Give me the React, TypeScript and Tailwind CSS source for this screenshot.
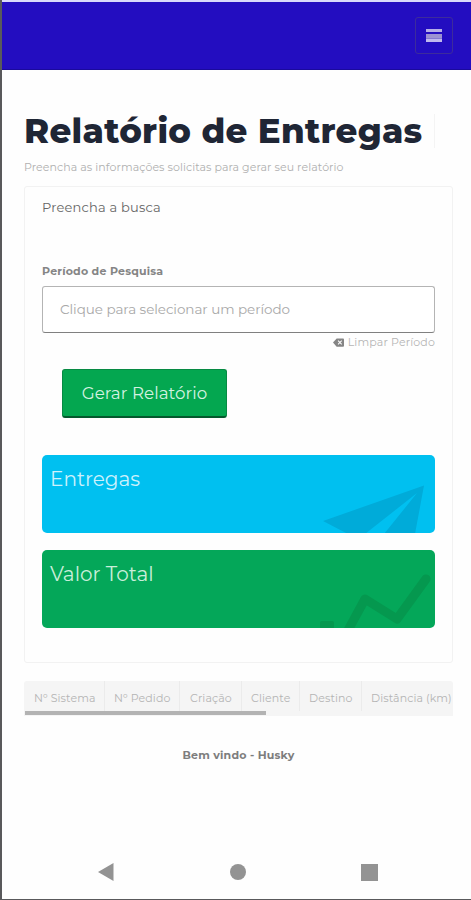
import React from 'react'

const columns = [
  { label: 'Nº Sistema', cell: 'w-[81px] pl-[10px] border-r' },
  { label: 'Nº Pedido', cell: 'w-[75px] pl-[9px] border-r' },
  { label: 'Criação', cell: 'w-[62px] pl-[10px] border-r' },
  { label: 'Cliente', cell: 'w-[58px] pl-[9px] border-r' },
  { label: 'Destino', cell: 'w-[62px] pl-[9px] border-r' },
  { label: 'Distância (km)', cell: 'w-[91px] pl-[9px]' },
]

function Header() {
  return (
    <header className="h-[70px] border-t-2 border-[#d9d9fb] border-b border-b-[#1a0a9c] bg-[#230dc0] flex items-center justify-end pr-[18px]">
      <button className="w-[38px] h-[37px] border border-[#3c2b9c] rounded-[3px] flex flex-col items-center justify-center">
        <span className="w-4 h-[3px] bg-[#b5ade8]"></span>
        <span className="w-4 h-[4px] mt-[2px] bg-[#9c92d2]"></span>
        <span className="w-4 h-[1px] bg-[#8579d0]"></span>
        <span className="w-4 h-[3px] bg-[#c0b9ee]"></span>
      </button>
    </header>
  )
}

function SearchForm() {
  return (
    <div>
      <label className="block h-4 leading-4 text-[11px] font-bold text-[#858585] tracking-[0.2px] whitespace-nowrap">Período de Pesquisa</label>
      <input
        className="block mt-[7px] w-full h-[47px] border border-[#b4b4b4] border-b-[#808080] rounded-[3px] pl-[17px] pb-[1px] text-[13.5px] tracking-[-0.05px] placeholder:text-[#a8a8a8] bg-white"
        placeholder="Clique para selecionar um período"
      />
      <div className="h-[18px] flex items-center justify-end gap-[4px] text-[11px] text-[#b5b5b5] tracking-[0.15px] whitespace-nowrap">
        <svg width="11" height="9" viewBox="0 0 12 9">
          <path d="M4 0h7q1 0 1 1v7q0 1-1 1H4L0 4.5z" fill="#858585" />
          <path d="M5.5 2.5l4 4m0-4l-4 4" stroke="#fff" strokeWidth="1.1" />
        </svg>
        <span>Limpar Período</span>
      </div>
      <button className="block ml-5 mt-[18px] w-[165px] h-[49px] pt-[2px] rounded-[3px] bg-[#04a750] border border-[#078a43] border-b-2 border-b-[#04592d] text-[#d5f2e1] text-[16.7px] tracking-[0.05px] whitespace-nowrap">
        Gerar Relatório
      </button>
    </div>
  )
}

export default function App() {
  return (
    <div className="w-full h-[900px] overflow-hidden bg-[#fefefe] border-l-2 border-[#59595b] border-b flex flex-col font-['Montserrat','Inter',sans-serif]">
      <Header />
      <main className="pl-[22px] pr-[18px] flex-1">
        {/* page title */}
        <div className="mt-[44px] h-[34px] w-[411px] border-r border-[#f4f4f4]">
          <h1 className="leading-[34px] text-[34px] font-extrabold text-[#1f2635] tracking-[0.3px] whitespace-nowrap">Relatório de Entregas</h1>
        </div>
        <p className="mt-[11px] h-4 leading-4 text-[11px] text-[#b0b0b0] tracking-[0.08px] whitespace-nowrap">Preencha as informações solicitas para gerar seu relatório</p>

        {/* search card */}
        <section className="mt-[11px] h-[477px] border border-[#f2f2f2] rounded-[3px] px-[17px] pt-[10px]">
          <h2 className="h-[20px] leading-[20px] mb-[46px] text-[13px] text-[#666] tracking-[0.2px] whitespace-nowrap">Preencha a busca</h2>
          <SearchForm />
          <div className="relative overflow-hidden mt-[37px] h-[78px] rounded-[5px] bg-[#00c0f0] px-[8px] pt-[9px]">
            <h3 className="leading-[30px] text-[20px] text-[#cdf1fc] whitespace-nowrap">Entregas</h3>
            <svg className="absolute right-0 bottom-0" width="120" height="60" viewBox="315 473 120 60">
              <path d="M323 521L424 485.500L415 534H384L417 493L365 534H348z" fill="#00abd9" />
            </svg>
          </div>
          <div className="relative overflow-hidden mt-[17px] h-[78px] rounded-[5px] bg-[#04a759] px-[8px] pt-[9px]">
            <h3 className="leading-[30px] text-[20px] text-[#c9eeda] whitespace-nowrap">Valor Total</h3>
            <svg className="absolute right-0 bottom-0" width="120" height="60" viewBox="315 567 120 60">
              <path d="M346 633L365 598L397 618L426 578" fill="none" stroke="#05984f" strokeWidth="9" strokeLinecap="round" strokeLinejoin="round" />
              <rect x="320" y="620" width="14" height="14" rx="2" fill="#05984f" />
            </svg>
          </div>
        </section>

        {/* results table */}
        <div className="mt-[18px] h-[35px] overflow-hidden bg-[#f5f5f5] rounded-t-[3px]">
          <div className="flex w-[429px] h-[30px] text-[11px] text-[#b4b4b4] tracking-[0.1px]">
            {columns.map((col) => (
              <div key={col.label} className={`${col.cell} shrink-0 pt-[4px] border-[#ebebeb] leading-[27px] whitespace-nowrap`}>
                {col.label}
              </div>
            ))}
          </div>
          <div className="ml-px w-[241px] h-[4px] bg-[#b3b3b3]"></div>
        </div>
        <p className="mt-[29px] leading-5 text-center text-[11px] font-bold text-[#7d7d7d] tracking-[0.2px]">Bem vindo - Husky</p>
      </main>

      {/* system navigation */}
      <nav className="h-[54px] pl-[95px] pr-[93px] flex justify-between items-center text-[#939393]">
        <svg width="17" height="18" viewBox="0 0 17 18"><path d="M16.500 0v18L1 9z" fill="currentColor" /></svg>
        <span className="w-4 h-4 rounded-full bg-[#939393]"></span>
        <span className="w-[17px] h-[17px] bg-[#939393]"></span>
      </nav>
    </div>
  )
}
